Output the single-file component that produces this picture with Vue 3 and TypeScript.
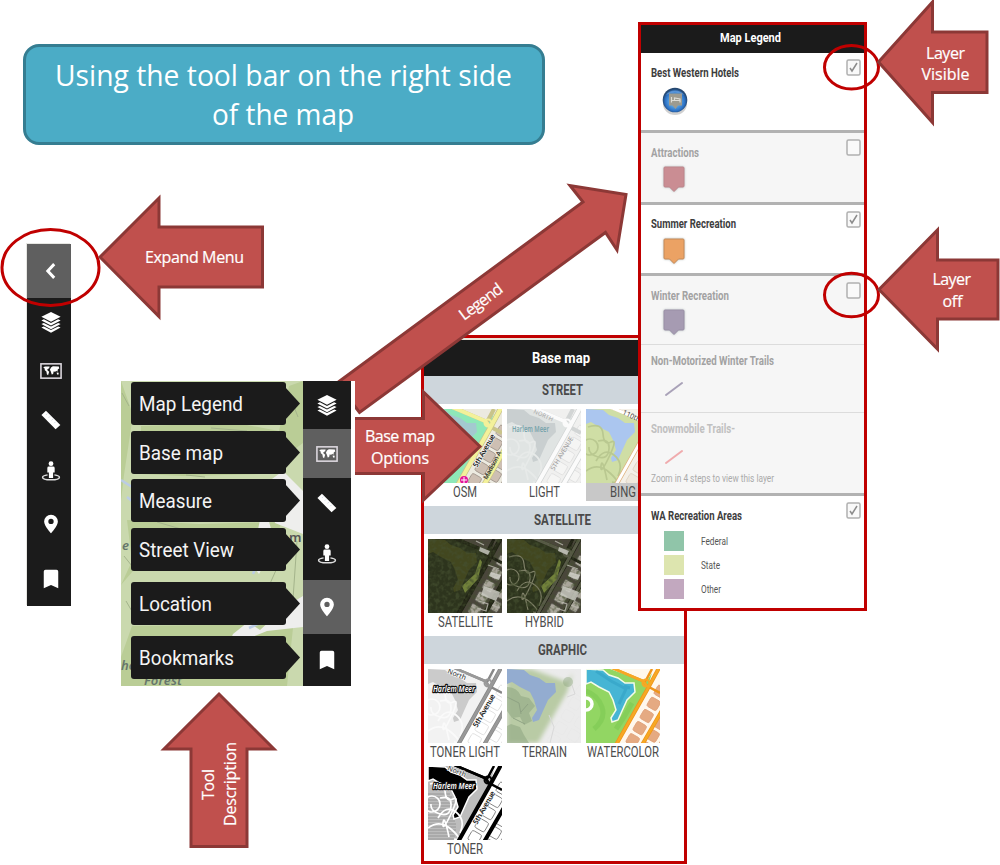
<script setup lang="ts">
import { h } from 'vue'

interface TextProps { t: string; w: number; s: number; b?: boolean }

// Single line of text fitted to a width; the box is as high as the capitals.
const Fit = (p: TextProps) =>
  h('svg', { width: p.w, height: Math.round(p.s * 0.71), style: 'display:block;overflow:visible;flex:none' }, [
    h('text', {
      x: 0, y: Math.round(p.s * 0.71), 'font-size': p.s, 'font-weight': p.b ? 700 : 400,
      textLength: p.w, lengthAdjust: 'spacingAndGlyphs', fill: 'currentColor',
    }, p.t),
  ])
Fit.props = { t: String, w: Number, s: Number, b: Boolean }

const icons: Record<string, string> = {
  back: '<path d="M15.500 4.500 8.500 12l7 7.500" fill="none" stroke="#fff" stroke-width="3.200"/>',
  layers: '<path d="M12 1 22.500 6.300 12 11.600 1.500 6.300z"/><path d="M1.500 10.300 4.200 9 12 13 19.800 9l2.700 1.300L12 15.900z"/><path d="M1.500 14.300 4.200 13 12 17 19.800 13l2.700 1.300L12 19.900z"/><path d="M1.500 18.100 4.200 16.800 12 20.800 19.800 16.800l2.700 1.300L12 23.600z"/>',
  map: '<rect x="1" y="4.200" width="22" height="15.600" fill="none" stroke="#ded9e0" stroke-width="1.700"/><path d="M3.500 8 5.500 7l5 .2-.5 1.800-2 1 .3 1.500 1.700 1.300-1.200 3.700-1.300-1-.5-3-1.700-1.200-.3-2zM12 8.200l2-1.500 6.500.5.5 2-1.500 1-.5 2.500-1.500-1-1 1.500-1.500-1-.7 3-1.500.7-1-3.400-1-1.800zM18 14l2-.5.5 2-1.500.5z"/>',
  ruler: '<path d="M6.500 1.800 1.600 6.500 17 22.200 22.200 17.400z"/><path d="m8 5-1.500 1.500M11 8l-1.500 1.500M14 11l-1.500 1.500M17 14l-1.500 1.500" stroke="#bcc9d8" stroke-width=".7"/>',
  person: '<circle cx="12" cy="4" r="2.600"/><path d="M8 8.600q0-1.600 1.700-1.600h4.600q1.700 0 1.700 1.600v5h-1.700V19.500H9.700v-5.900H8z"/><path d="M8.300 16.200c-3 .5-5.500 1.300-5.500 2.500 0 1.700 4.200 2.900 9.200 2.900s9.200-1.200 9.200-2.900c0-1.200-2.500-2-5.500-2.500" fill="none" stroke="#dcdcdc" stroke-width="1.600"/>',
  pin: '<path fill-rule="evenodd" d="M12 1.800a7.500 7.500 0 0 0-7.500 7.500C4.500 14.200 12 22.200 12 22.200s7.500-8 7.500-12.900a7.500 7.500 0 0 0-7.500-7.500zm0 4.500a2.900 2.900 0 1 1 0 5.800 2.900 2.900 0 0 1 0-5.800z"/>',
  bookmark: '<path d="M6 2h12q1.900 0 1.900 1.700v18.300L12 18.500 4.100 22V3.700Q4.100 2 6 2z"/>',
}

const narrowBar = [
  { icon: 'back', cls: 'h54 on' }, { icon: 'layers', cls: 'h48' }, { icon: 'map', cls: 'h49' },
  { icon: 'ruler', cls: 'h49' }, { icon: 'person', cls: 'h53' }, { icon: 'pin', cls: 'h54' }, { icon: 'bookmark', cls: 'h55' },
]
const tools = [
  { icon: 'layers', cls: 'h48 up', name: 'Map Legend', w: 104 },
  { icon: 'map', cls: 'h49 on', name: 'Base map', w: 84 },
  { icon: 'ruler', cls: 'h49 up', name: 'Measure', w: 73 },
  { icon: 'person', cls: 'h53 up', name: 'Street View', w: 95 },
  { icon: 'pin', cls: 'h54 on', name: 'Location', w: 73 },
  { icon: 'bookmark', cls: 'h52', name: 'Bookmarks', w: 95 },
]

interface Theme {
  bg: string; park: string; lake: string; road: string; edge: string; block: string; rim: string
  width: number; label?: string; halo?: string; avenue?: boolean; aerial?: boolean; blur?: boolean; paths?: string; pharmacy?: boolean; shore?: string
}
interface Tile { name: string; w: number; theme: Theme; active?: boolean }

const osm: Theme = { bg: '#eceae0', park: '#8ee8b8', lake: '#a3c9cf', road: '#f3f19a', edge: '#c9c48a', block: '#cdbfb3', rim: '#9f958c', width: 4, avenue: true, pharmacy: true }
const light: Theme = { bg: '#f0f0ef', park: '#e0e4e3', lake: '#c9cfd0', road: '#fbfbfb', edge: '#d2d5d5', block: '#f5f5f4', rim: '#dfe0df', width: 4, label: '#78a4ac', paths: '#e7eae9' }
const bing: Theme = { bg: '#f4f0e8', park: '#cfdea5', lake: '#abc6ef', road: '#ffffff', edge: '#dfb27d', block: '#efe8dc', rim: '#ded3c2', width: 3, paths: '#b9c890' }
const sat: Theme = { bg: '#4a463b', park: '#2d341d', lake: '#42471f', road: '#262a18', edge: '#1f2114', block: '#aaa69b', rim: '#55544c', width: 3, aerial: true }
const hybrid: Theme = { ...sat, road: '#5a5c49', paths: '#818269' }
const tonerLight: Theme = { bg: '#ffffff', park: '#f2f2f2', lake: '#cbcbcb', road: '#999999', edge: '#888888', block: '#ffffff', rim: '#dddddd', width: 2.5, label: '#fff', halo: '#111', avenue: true, paths: '#fafafa' }
const terrain: Theme = { bg: '#ebebeb', park: '#b9cba5', lake: '#93acd0', road: '#ececec', edge: '#e2e4df', block: '#ebebeb', rim: '#e9e9e9', width: 0.5, blur: true }
const water: Theme = { bg: '#fff8ed', park: '#92d663', lake: '#46b5d4', road: '#f7a824', edge: '#ee951b', block: '#e5aa82', rim: '#dfa078', width: 2.5, shore: '#f4fbe8' }
const toner: Theme = { bg: '#ffffff', park: '#bdbdbd', lake: '#000000', road: '#000000', edge: '#000000', block: '#ffffff', rim: '#777777', width: 2.5, label: '#fff', halo: '#111', avenue: true, paths: '#ffffff', shore: '#ffffff' }

const groups: { title: string; w: number; tiles: Tile[] }[] = [
  { title: 'STREET', w: 41, tiles: [{ name: 'OSM', w: 24, theme: osm }, { name: 'LIGHT', w: 31, theme: light }, { name: 'BING', w: 26, theme: bing, active: true }] },
  { title: 'SATELLITE', w: 57, tiles: [{ name: 'SATELLITE', w: 55, theme: sat }, { name: 'HYBRID', w: 39, theme: hybrid }] },
  { title: 'GRAPHIC', w: 49, tiles: [{ name: 'TONER LIGHT', w: 70, theme: tonerLight }, { name: 'TERRAIN', w: 45, theme: terrain }, { name: 'WATERCOLOR', w: 72, theme: water }, { name: 'TONER', w: 36, theme: toner }] },
]

interface Layer { name: string; w: number; cls: string; check?: boolean; box?: boolean; kind: string; fill?: string; rim?: string; note?: string }
const layers: Layer[] = [
  { name: 'Best Western Hotels', w: 88, cls: 'r-hotel', box: true, check: true, kind: 'hotel' },
  { name: 'Attractions', w: 48, cls: 'off r-attr', box: true, kind: 'pin', fill: '#ca8d93', rim: '#bd858b' },
  { name: 'Summer Recreation', w: 85, cls: 'r-summer', box: true, check: true, kind: 'pin', fill: '#eba264', rim: '#c58a58' },
  { name: 'Winter Recreation', w: 78, cls: 'off r-winter thin', box: true, kind: 'pin', fill: '#a69bb2', rim: '#998fa5' },
  { name: 'Non-Motorized Winter Trails', w: 123, cls: 'off r-trails thin', kind: 'line', fill: '#a9a2b8' },
  { name: 'Snowmobile Trails-', w: 84, cls: 'off faint r-snow', kind: 'line', fill: '#f0abad', note: 'Zoom in 4 steps to view this layer' },
]
const areas = [
  { name: 'Federal', w: 27, cls: 'federal' }, { name: 'State', w: 19, cls: 'state' }, { name: 'Other', w: 20, cls: 'other' },
]
const cells = [0, 1, 2, 3, 4, 5, 6, 7, 8, 9, 10, 11, 12, 13, 14, 15, 16, 17]
</script>

<template>
  <main class="slide">
    <section class="banner">
      <Fit t="Using the tool bar on the right side" :w="457" :s="29.5" />
      <Fit t="of the map" :w="142" :s="29.5" />
    </section>

    <nav class="bar narrow">
      <div v-for="b in narrowBar" :key="b.icon" class="cell" :class="b.cls">
        <svg class="icon" viewBox="0 0 24 24" v-html="icons[b.icon]" />
      </div>
    </nav>

    <section class="base">
      <div class="strip"></div>
      <header class="base-head"><Fit t="Base map" :w="58" :s="15" b /></header>
      <template v-for="g in groups" :key="g.title">
        <h3 class="group"><Fit :t="g.title" :w="g.w" :s="14" b /></h3>
        <div class="tiles">
          <figure v-for="t in g.tiles" :key="t.name" class="tile" :class="{ active: t.active }">
            <svg class="thumb" viewBox="0 0 74 74">
              <rect width="74" height="74" :fill="t.theme.bg" />
              <g transform="translate(33 74) rotate(-60)" :stroke="t.theme.rim" stroke-width=".8">
                <rect v-for="c in cells" :key="c" :x="(c % 6) * 14 - 10" :y="5 + Math.floor(c / 6) * 15" width="10.500" height="11" rx="2" :fill="t.theme.block" />
              </g>
              <path d="M0 0H24L60 13 66 4 60 23 31 74H0z" :fill="t.theme.park" :filter="t.theme.blur ? 'url(#soft)' : undefined" />
              <path d="M0 0 17 1 23 6 32 9 39 14 48 14 49 23 41 31 36 42 32 51 26 53 25 49 30 41 27 31 23 23 13 18 5 13 0 15z" :fill="t.theme.lake" :stroke="t.theme.shore" stroke-width="1.500" />
              <g v-if="t.name === 'WATERCOLOR'">
                <path d="M10 2 25 12 40 20 33 35M38 17l6 2" fill="none" stroke="#2999bd" stroke-width="3" opacity=".4" />
                <path d="M0 22q12 4 16 16T8 60M30 60l8-12 8-14" fill="none" stroke="#74c44b" stroke-width="5" opacity=".4" />
                <circle cx="0" cy="35" r="6" fill="none" stroke="#fff" stroke-width="3.500" />
              </g>
              <g v-if="t.name === 'TONER'" stroke="#8d8d8d" stroke-width=".8">
                <path d="M0 28h22M0 31h24M0 34h26M0 37h27M0 40h25M0 43h23M0 46h23M0 49h24M0 52h25M0 55h27M0 58h28M0 61h28M0 64h28M0 67h28M0 70h27M0 73h27" />
              </g>
              <g v-if="t.theme.blur" fill="#8ea681" opacity=".55">
                <path d="M0 18q10 0 14 9l8 2 6 8-6 7 3 8-8 4-4-8-8 1-5-7zM4 55l9 3 4 8 5 8H0V57z" />
                <path d="m0 28 12 6 2 11m-8 4 12 6m3-20-7 8" stroke="#6d8269" fill="none" />
                <circle cx="61" cy="13" r="5" opacity=".8" />
              </g>
              <g v-if="t.theme.paths" fill="none" :stroke="t.theme.paths" :stroke-width="t.theme.aerial ? 1.2 : 1.7">
                <circle cx="4" cy="38" r="8" />
                <path d="M2 18q14-5 15 7t8 8-2 15-8 9 6 14M10 52q8-14 18-6t4 21M12 32q12-3 11 8t-11 8-9-10M0 62q12-9 24 2t2 9" />
              </g>
              <g v-if="!t.theme.blur" fill="none" stroke-linejoin="round">
                <path d="M24-2 57 12 61 17 74 24M58 15 66 0" :stroke="t.theme.edge" :stroke-width="t.theme.width" />
                <path d="M30 76 61 21 74-3M56 76 78 38" :stroke="t.theme.edge" :stroke-width="t.theme.width + 1.5" />
                <path d="M30 76 61 21 74-3M56 76 78 38M24-2 57 12 61 17" :stroke="t.theme.road" :stroke-width="t.theme.width" />
                <circle cx="60" cy="14" r="3.500" :stroke="t.theme.road" stroke-width="2" />
              </g>
              <path v-else d="m42 46 5 12-4 16M60 28l8-3-3-9" fill="none" stroke="#d8d8d8" />
              <template v-if="t.theme.aerial">
                <path d="m34 47 13-12 5-15 2 3-4 17-13 14z" fill="#71813a" />
                <rect width="74" height="74" filter="url(#grain)" opacity=".65" />
                <path d="m52 8 10 4-2 4-9-4M56 47l16 6-4 9-15-6zM63 33l10 3-2 5-10-4" fill="#d0cfc8" opacity=".8" />
                <path d="m51 62 9 3-2 7-9-3M64 66l8 3M60 26l11 4M57 49l12 5M48 2l8 4" fill="none" stroke="#bcbab0" stroke-width="1.300" opacity=".8" />
              </template>
              <text v-if="t.theme.label" x="5" y="23" font-size="8" :textLength="t.theme.halo ? 42 : 37" lengthAdjust="spacingAndGlyphs" :font-style="t.theme.halo ? 'italic' : 'normal'" font-weight="600" :fill="t.theme.label" :stroke="t.theme.halo" stroke-width="2.500" stroke-linejoin="round" paint-order="stroke" class="place">Harlem Meer</text>
              <text v-if="t.theme.avenue" transform="translate(49 59) rotate(-60)" font-size="7.500" font-weight="600" fill="#222" stroke="#fff" stroke-width="1" paint-order="stroke" class="place" textLength="37">5th Avenue</text>
              <text v-if="t.name === 'LIGHT'" transform="translate(47 62) rotate(-59)" font-size="6.500" fill="#999" class="place" textLength="38">5TH AVENUE</text>
              <text v-if="t.name === 'LIGHT'" transform="translate(26 4) rotate(24)" font-size="6" fill="#aaa" class="place">NORTH</text>
              <text v-if="t.name === 'BING'" transform="translate(36 5) rotate(25)" font-size="7" fill="#444" class="place">110th</text>
              <text v-if="t.theme.halo" transform="translate(19 4) rotate(22)" font-size="7" fill="#222" stroke="#fff" stroke-width="1" paint-order="stroke" class="place">North</text>
              <text v-if="t.theme.pharmacy" transform="translate(59 71) rotate(-62)" font-size="6.500" fill="#333" font-weight="600" class="place" textLength="31">Madison A</text>
              <g v-if="t.theme.pharmacy"><circle cx="36" cy="71" r="4" fill="#e3149b" /><path d="M36 68v6m-3-3h6" stroke="#fff" stroke-width="1" /></g>
            </svg>
            <figcaption class="cap"><Fit :t="t.name" :w="t.w" :s="14" /></figcaption>
          </figure>
        </div>
      </template>
    </section>

    <svg class="overlay" viewBox="0 0 1000 865">
      <defs>
        <filter id="soft"><feGaussianBlur stdDeviation="2" /></filter>
        <filter id="grain" x="0" y="0" width="1" height="1">
          <feTurbulence type="fractalNoise" baseFrequency=".25" numOctaves="3" seed="8" />
          <feColorMatrix values="0 0 0 0 .06  0 0 0 0 .08  0 0 0 0 .03  3 0 0 0 -1.250" />
        </filter>
      </defs>
      <g class="arrow">
        <path d="M337 383 583 202 570 185.500 626 194.500 617 250 605.500 232.500 359.500 412.500z" />
        <path d="M340 418.500H423.500V392L480 446.500 423.500 500V473.500H340z" />
      </g>
      <g class="note">
        <text transform="translate(464 321) rotate(-36.500)" textLength="50">Legend</text>
        <text x="365" y="442" textLength="70">Base map</text>
        <text x="371" y="463.500" textLength="58">Options</text>
      </g>
    </svg>

    <section class="toolbox">
      <svg class="terrain" viewBox="0 0 182 305">
        <rect width="182" height="305" fill="#cad9ae" />
        <path d="M0 0 12 34 3 94 0 120zM20 45 115 42 158 50 168 5 182 0V62L140 93 62 95 20 93zM0 204 11 180 6 139 78 143 160 141 155 162 80 156 34 164zM0 276l11-31 86-1 35-19 10-18 31 30-7 68H0z" fill="#bacd96" />
        <path d="M144 103 154 142 182 153V110L162 90zM130 182l9-43 8-2 7 25-16 31zM112 253l15-12 12 8 11-10 17-15 15-9v31l-36 4-20 8-12 35h-19z" fill="#eeeeed" />
        <path d="M132 193q9-21 16-46M128 247l11-5 8-9M0 99l11 7M6 116l5 4" fill="none" stroke="#bbcce4" stroke-width="2.500" />
        <path d="M1 12l7 13M65 94l19 2M90 47l36 3M3 175l8 10M36 141l24 7M45 303l20-9M5 220l7 12M167 10l10 26M156 187l-9 20M176 160l-4 58" stroke="#a4b48b" fill="none" />
        <text x="1" y="169">e</text><text x="0" y="289">ho</text><text x="23" y="304" textLength="38">Forest</text><text x="168" y="161" class="road">m</text>
      </svg>
      <div class="tool-list">
        <div v-for="t in tools" :key="t.name" class="tool" :class="t.cls">
          <div class="tip">
            <Fit :t="t.name" :w="t.w" :s="19.5" />
            <svg class="nib" viewBox="0 0 15 35"><path d="M0 0 15 16.500 0 33z" fill="#1b1b1b" /></svg>
          </div>
          <div class="cell"><svg class="icon" viewBox="0 0 24 24" v-html="icons[t.icon]" /></div>
        </div>
      </div>
    </section>

    <section class="legend">
      <header class="legend-head"><Fit t="Map Legend" :w="61" :s="13" b /></header>
      <div v-for="l in layers" :key="l.name" class="layer" :class="l.cls">
        <div class="layer-top">
          <Fit class="layer-name" :t="l.name" :w="l.w" :s="12" b />
          <svg v-if="l.box" class="check" viewBox="0 0 15 17"><rect x="1" y="1" width="13" height="15" rx="1.500" /><path v-if="l.check" d="m4 9 2 3 5-8" /></svg>
        </div>
        <svg v-if="l.kind === 'hotel'" class="hotel" viewBox="0 0 26 29">
          <defs><radialGradient id="ball" cx=".5" cy=".55"><stop offset=".4" stop-color="#5ca8e8" /><stop offset=".8" stop-color="#2b70c4" /><stop offset="1" stop-color="#25476f" /></radialGradient></defs>
          <ellipse cx="13" cy="17" rx="12" ry="11" fill="#777" opacity=".35" />
          <circle cx="13" cy="13" r="12.300" fill="url(#ball)" />
          <path d="M4 8a10 8 0 0 1 18 0q-9-5-18 0" fill="#9bc9f2" opacity=".4" />
          <path d="M7 6.500h13v12h-4L13.500 22 10.500 18.500H7z" fill="#9d9b90" />
          <path d="M9.500 10v5.500m0-2h8.500v2m0-2v-1.500l-5.500-1v2" fill="none" stroke="#dedcd5" stroke-width="1.200" />
        </svg>
        <svg v-else-if="l.kind === 'pin'" class="marker" viewBox="0 0 22 27"><path d="M2 1H20Q21 1 21 2V20Q21 21 20 21H15.500L11 25.500 6.500 21H2Q1 21 1 20V2Q1 1 2 1z" :fill="l.fill" :stroke="l.rim" /></svg>
        <svg v-else class="trail" viewBox="0 0 20 16"><path d="m2 14 16-12" :stroke="l.fill" stroke-width="2" stroke-linecap="round" /></svg>
        <div v-if="l.note" class="layer-note"><Fit :t="l.note" :w="123" :s="11" /></div>
      </div>
      <div class="layer r-areas">
        <div class="layer-top">
          <Fit class="layer-name" t="WA Recreation Areas" :w="91" :s="12" b />
          <svg class="check" viewBox="0 0 15 17"><rect x="1" y="1" width="13" height="15" rx="1.500" /><path d="m4 9 2 3 5-8" /></svg>
        </div>
        <ul class="areas">
          <li v-for="a in areas" :key="a.name"><span class="swatch" :class="a.cls"></span><Fit :t="a.name" :w="a.w" :s="11" /></li>
        </ul>
      </div>
    </section>

    <svg class="overlay" viewBox="0 0 1000 865">
      <g class="ring">
        <ellipse cx="50.500" cy="267.500" rx="48.500" ry="38" />
        <ellipse cx="851.500" cy="67.300" rx="27" ry="21.700" />
        <ellipse cx="851.500" cy="295" rx="27" ry="21.700" />
      </g>
      <g class="arrow">
        <path d="M100 257 159 198V227H262.500V287H159V316.500z" />
        <path d="M878.500 62 932.500 2V32H987V92.500H932.500V122.500z" />
        <path d="M879 289.500 937.500 230V260H998V319H937.500V349z" />
        <path d="M219 694 274 749H247V846.500H191V749H164z" />
      </g>
      <g class="note">
        <text x="145" y="263" textLength="99">Expand Menu</text>
        <text x="926" y="58.500" textLength="39">Layer</text>
        <text x="921.500" y="80" textLength="48">Visible</text>
        <text x="932.500" y="285" textLength="38.500">Layer</text>
        <text x="942.500" y="306.500" textLength="20">off</text>
        <text transform="translate(214 800) rotate(-90)" textLength="31">Tool</text>
        <text transform="translate(236 826) rotate(-90)" textLength="84">Description</text>
      </g>
    </svg>
  </main>
</template>

<style>
body { margin: 0; background: #fff; overflow: hidden; }
</style>

<style scoped>
.slide { position: relative; width: 1000px; height: 865px; overflow: hidden; background: #fff; font-family: Roboto, "Liberation Sans", sans-serif; }
.slide * { box-sizing: border-box; }
.banner { position: absolute; left: 23px; top: 44px; width: 522px; height: 101px; padding: 18px 2px 0 0; border: 3px solid #357d91; border-radius: 16px; background: #4bacc6; color: #fff; font-family: "Open Sans", "Noto Sans", sans-serif; display: flex; flex-direction: column; align-items: center; gap: 18px; -webkit-text-stroke: 0.25px #fff; }
.overlay { position: absolute; left: 0; top: 0; width: 1000px; height: 865px; pointer-events: none; }
.arrow { fill: #c0504d; stroke: #8c3836; stroke-width: 3; }
.ring { fill: none; stroke: #c00000; stroke-width: 3; }
.note { fill: #fff; font: 400 16px "Open Sans", "Noto Sans", sans-serif; }
.note text { stroke: #fff; stroke-width: .2; }

.bar { position: absolute; display: flex; flex-direction: column; background: #1b1b1b; }
.narrow { left: 27px; top: 244px; width: 44px; height: 362px; box-shadow: -1px -1px 0 #e6e6e2; }
.cell { display: flex; align-items: center; justify-content: center; padding-left: 4px; }
.icon { width: 22px; height: 22px; fill: #fff; }
.on { background: #5f5f5f; }
.h48 { height: 48px; } .h49 { height: 49px; } .h52 { height: 52px; } .h53 { height: 53px; } .h54 { height: 54px; } .h55 { height: 55px; }

.toolbox { position: absolute; left: 121px; top: 381px; width: 234px; height: 305px; border-right: 4px solid #fff; }
.terrain { position: absolute; left: 0; top: 0; width: 182px; height: 305px; }
.terrain text { font: italic 600 13px "Noto Sans", sans-serif; fill: #66766b; }
.terrain .road { font-style: normal; fill: #555; }
.tool-list { position: relative; display: flex; flex-direction: column; }
.tool { display: flex; background: none; }
.tip { position: relative; width: 155px; height: 43px; margin: 2px 17px 0 10px; padding-left: 8px; display: flex; align-items: center; background: #1b1b1b; border-radius: 3px; color: #f4f4f4; }
.tool.up .tip { margin-top: 1px; }
.nib { position: absolute; left: 154px; top: 5px; width: 15px; height: 35px; }
.tool .cell { width: 48px; padding: 0; background: #1b1b1b; }
.tool.on .cell { background: #5f5f5f; }

.base { position: absolute; left: 421px; top: 335px; width: 266px; height: 529px; border: 3px solid #c00000; background: #fff; }
.strip { height: 2px; background: #e7e5d8; }
.base-head { height: 36px; padding: 12px 0 0 108px; background: #1b1b1b; color: #fff; }
.group { display: flex; justify-content: center; width: 260px; height: 28px; margin: 0; padding: 9px 0 0 17px; background: #ced6dc; color: #4a4a4a; }
.tiles { display: flex; flex-wrap: wrap; gap: 5px; height: 102px; padding: 5px 0 0 4px; }
.tiles:last-child { height: auto; }
.tile { width: 74px; height: 92px; margin: 0; color: #4d4d4d; }
.tile.active { background: #c8c8c8; }
.thumb { display: block; width: 74px; height: 74px; }
.place { font-family: "Noto Sans", sans-serif; }
.cap { display: flex; justify-content: center; padding-top: 4px; }

.legend { position: absolute; left: 638px; top: 22px; width: 229px; height: 589px; border: 3px solid #c00000; background: #fff; display: flex; flex-direction: column; }
.legend-head { height: 28px; padding: 8px 0 0 79px; background: #1b1b1b; color: #fff; }
.layer { color: #3d3d3d; border-bottom: 3px solid #b2b2b2; }
.layer.off { background: #f6f6f6; color: #a2a2a2; }
.layer.faint { color: #c0c0c0; }
.layer.thin { border-bottom: 1px solid #dcdcdc; }
.r-hotel { height: 80px; } .r-attr { height: 72px; } .r-summer { height: 71px; }
.r-winter { height: 69px; } .r-trails { height: 68px; } .r-snow { height: 83px; }
.r-areas { flex: 1; border: 0; }
.layer-top { display: flex; align-items: flex-start; justify-content: space-between; height: 25px; padding: 6px 3px 0 10px; }
.layer-name { margin-top: 9px; }
.r-hotel .layer-top { height: 34px; }
.r-attr .layer-top { height: 33px; }
.r-summer .layer-top { height: 33px; }
.r-summer .layer-name { margin-top: 8px; }
.r-winter .layer-top { height: 33px; }
.r-trails .layer-top, .r-snow .layer-top { height: 36px; padding-top: 2px; }
.r-areas .layer-top { height: 35px; }
.check { width: 15px; height: 17px; fill: #f9f9f9; stroke: #b0b0b0; stroke-width: 1.500; }
.check path { fill: none; stroke: #8c8c8c; stroke-width: 1.500; }
.hotel { display: block; width: 26px; height: 29px; margin-left: 21px; }
.marker { display: block; width: 22px; height: 27px; margin-left: 22px; filter: drop-shadow(0 0 1px #b8c2c2); }
.trail { display: block; width: 20px; height: 16px; margin-left: 23px; fill: none; }
.layer-note { padding: 9px 0 0 10px; color: #aaa; }
.areas { margin: 0; padding: 0 0 0 23px; list-style: none; display: flex; flex-direction: column; gap: 4px; color: #555; }
.areas li { display: flex; align-items: center; gap: 17px; height: 20px; }
.swatch { width: 20px; height: 20px; }
.federal { background: #90c5a9; } .state { background: #dde5af; } .other { background: #c2a8bf; }
</style>
